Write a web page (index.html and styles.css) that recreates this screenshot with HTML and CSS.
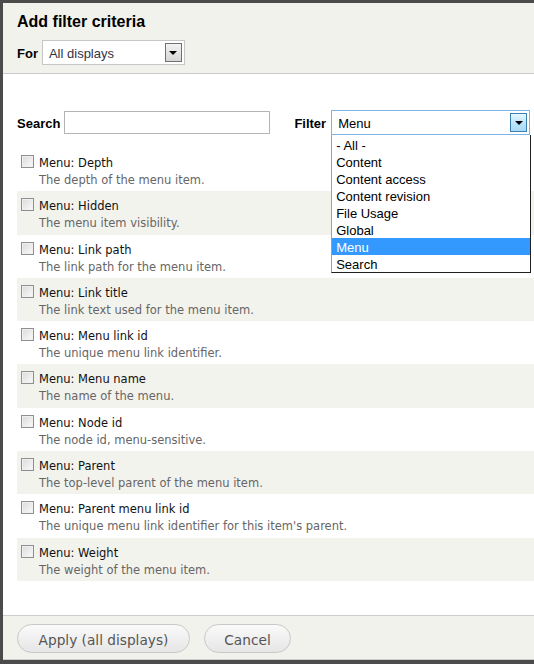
FILE: index.html
```html
<!DOCTYPE html>
<html>
<head>
<meta charset="utf-8">
<title>Add filter criteria</title>
<link rel="stylesheet" href="styles.css">
</head>
<body>
<div class="dialog">
  <div class="header">
    <h1 class="title">Add filter criteria</h1>
    <div class="for-row">
      <span class="lbl">For</span>
      <div class="select select-for">
        <span class="select-text dim">All displays</span>
        <span class="select-btn"><span class="tri"></span></span>
      </div>
    </div>
  </div>
  <div class="content">
    <div class="search-row">
      <span class="lbl lbl-search">Search</span>
      <input class="search-input" type="text">
      <span class="lbl lbl-filter">Filter</span>
      <div class="filter-wrap">
        <div class="select select-filter">
          <span class="select-text">Menu</span>
          <span class="select-btn blue"><span class="tri"></span></span>
        </div>
        <ul class="dropdown">
          <li>- All -</li>
          <li>Content</li>
          <li>Content access</li>
          <li>Content revision</li>
          <li>File Usage</li>
          <li>Global</li>
          <li class="sel">Menu</li>
          <li>Search</li>
        </ul>
      </div>
    </div>
    <div class="list">
      <div class="item"><div class="item-top"><span class="cb"></span><span class="item-label">Menu: Depth</span></div><div class="item-desc">The depth of the menu item.</div></div>
      <div class="item alt"><div class="item-top"><span class="cb"></span><span class="item-label">Menu: Hidden</span></div><div class="item-desc">The menu item visibility.</div></div>
      <div class="item"><div class="item-top"><span class="cb"></span><span class="item-label">Menu: Link path</span></div><div class="item-desc">The link path for the menu item.</div></div>
      <div class="item alt"><div class="item-top"><span class="cb"></span><span class="item-label">Menu: Link title</span></div><div class="item-desc">The link text used for the menu item.</div></div>
      <div class="item"><div class="item-top"><span class="cb"></span><span class="item-label">Menu: Menu link id</span></div><div class="item-desc">The unique menu link identifier.</div></div>
      <div class="item alt"><div class="item-top"><span class="cb"></span><span class="item-label">Menu: Menu name</span></div><div class="item-desc">The name of the menu.</div></div>
      <div class="item"><div class="item-top"><span class="cb"></span><span class="item-label">Menu: Node id</span></div><div class="item-desc">The node id, menu-sensitive.</div></div>
      <div class="item alt"><div class="item-top"><span class="cb"></span><span class="item-label">Menu: Parent</span></div><div class="item-desc">The top-level parent of the menu item.</div></div>
      <div class="item"><div class="item-top"><span class="cb"></span><span class="item-label">Menu: Parent menu link id</span></div><div class="item-desc">The unique menu link identifier for this item's parent.</div></div>
      <div class="item alt"><div class="item-top"><span class="cb"></span><span class="item-label">Menu: Weight</span></div><div class="item-desc">The weight of the menu item.</div></div>
    </div>
  </div>
  <div class="footer">
    <button class="btn btn-apply">Apply (all displays)</button>
    <button class="btn btn-cancel">Cancel</button>
  </div>
</div>
</body>
</html>
```
FILE: styles.css
```css
html, body {
  margin: 0;
  padding: 0;
}
body {
  background: #4b4b4b;
  width: 534px;
  height: 664px;
  overflow: hidden;
  font-family: "Liberation Sans", Arial, sans-serif;
}
.dialog {
  margin: 3px 0 0 3px;
  height: 657px;
  background: #fff;
  display: flex;
  flex-direction: column;
}
.header {
  height: 71px;
  box-sizing: border-box;
  background: #f2f2ed;
  border-bottom: 1px solid #cdcdcd;
  padding: 9px 0 0 14px;
}
.title {
  margin: 0;
  font-size: 16px;
  line-height: 20px;
  font-weight: bold;
  color: #000;
}
.for-row {
  margin-top: 8px;
  display: flex;
  align-items: center;
}
.lbl {
  font-size: 13px;
  font-weight: bold;
  color: #000;
  padding-top: 1px;
}
.for-row .lbl {
  margin-right: 4px;
}
.select {
  box-sizing: border-box;
  height: 25px;
  background: #fff;
  display: flex;
  align-items: center;
}
.select-for {
  width: 143px;
  border: 1px solid #c6c6c6;
  padding-left: 6px;
}
.select-filter {
  width: 199px;
  border: 1px solid #7eb4ea;
  padding-left: 6px;
}
.select-text {
  font-size: 13px;
  color: #000;
  padding-top: 1px;
}
.select-text.dim {
  color: #333344;
}
.select-btn {
  margin-left: auto;
  margin-right: 2px;
  width: 17px;
  height: 19px;
  box-sizing: border-box;
  border: 1px solid #707070;
  background: linear-gradient(#f2f2f2, #d6d6d6);
  display: flex;
  align-items: center;
  justify-content: center;
}
.select-btn.blue {
  border-color: #3c7fb1;
  background: linear-gradient(#eaf6fd, #bee6fd 50%, #a7d9f5);
}
.tri {
  width: 0;
  height: 0;
  border-left: 4px solid transparent;
  border-right: 4px solid transparent;
  border-top: 4px solid #000;
  margin-top: 1px;
}
.content {
  flex: 1;
  padding: 36px 0 0 14px;
}
.search-row {
  display: flex;
  align-items: center;
  height: 25px;
}
.lbl-search {
  margin-right: 4px;
}
.search-input {
  width: 206px;
  height: 23px;
  box-sizing: border-box;
  border: 1px solid #b4b4b4;
  margin: 0;
  padding: 0 3px;
  outline: none;
}
.lbl-filter {
  margin-left: 24px;
  margin-right: 5px;
}
.filter-wrap {
  position: relative;
}
.dropdown {
  position: absolute;
  top: 25px;
  left: 0;
  width: 200px;
  box-sizing: border-box;
  margin: 0;
  padding: 1px 0 0;
  list-style: none;
  background: #fff;
  border: 1px solid #202020;
  border-top: none;
  border-left-color: #a0a0a0;
  z-index: 5;
}
.dropdown li {
  height: 17px;
  box-sizing: border-box;
  padding-top: 1px;
  line-height: 17px;
  font-size: 13px;
  padding-left: 4px;
  color: #000;
  overflow: hidden;
}
.dropdown li.sel {
  background: #3399ff;
  color: #fff;
}
.list {
  margin-top: 13px;
}
.item {
  height: 43.3px;
  box-sizing: border-box;
  padding: 7px 0 0 4px;
  font-family: "DejaVu Sans", Verdana, sans-serif;
  font-size: 11.5px;
  line-height: 17px;
}
.item.alt {
  background: #f3f3ee;
}
.item-top {
  display: flex;
  align-items: flex-start;
}
.cb {
  width: 13px;
  height: 13px;
  box-sizing: border-box;
  margin-top: 0;
  margin-right: 5px;
  border: 1px solid #8f8f8f;
  background: linear-gradient(135deg, #dadada, #fbfbfb);
  box-shadow: inset 0 0 0 1px #f0f0f0;
}
.item-label {
  color: #111;
}
.item-desc {
  padding-left: 18px;
  color: #666;
}
.footer {
  height: 45px;
  box-sizing: border-box;
  background: #f2f2ed;
  border-top: 1px solid #cdcdcd;
  border-bottom: 1px solid #cdcdcd;
  padding: 8px 0 0 14px;
  display: flex;
  align-items: flex-start;
}
.btn {
  height: 29px;
  box-sizing: border-box;
  border: 1px solid #c8c8c8;
  border-radius: 15px;
  background: linear-gradient(#fafafa, #e6e6e6);
  font-family: "DejaVu Sans", Verdana, sans-serif;
  font-size: 13.7px;
  color: #555;
  padding: 2px 0 0;
  margin: 0;
}
.btn-apply {
  width: 173px;
}
.btn-cancel {
  width: 87px;
  margin-left: 14px;
}
```
